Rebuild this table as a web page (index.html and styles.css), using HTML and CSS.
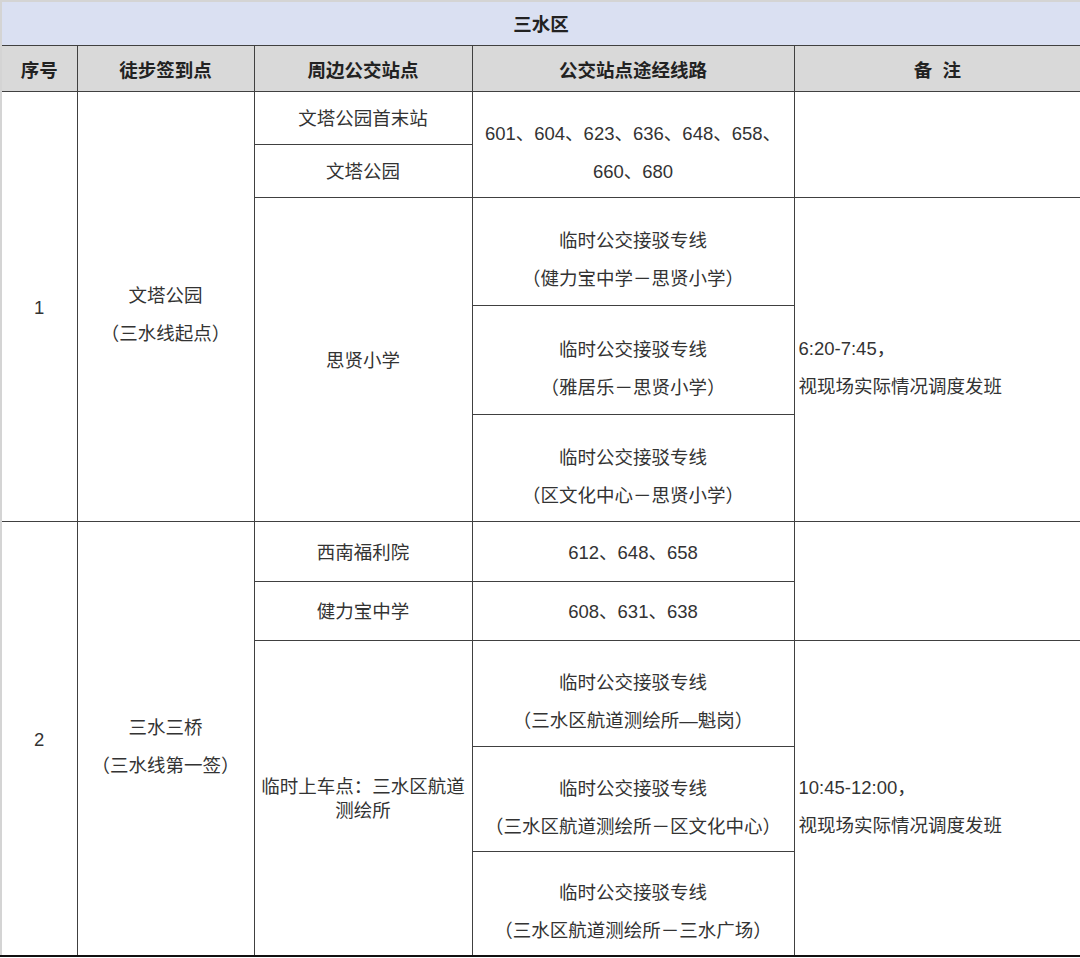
FILE: index.html
```html
<!DOCTYPE html>
<html lang="zh-CN">
<head>
<meta charset="utf-8">
<title>三水区</title>
<link rel="stylesheet" href="styles.css">
</head>
<body>
<table class="grid">
  <colgroup>
    <col class="c1"><col class="c2"><col class="c3"><col class="c4"><col class="c5">
  </colgroup>
  <tr class="h-title"><th colspan="5" class="title">三水区</th></tr>
  <tr class="h-head">
    <th class="head">序号</th>
    <th class="head">徒步签到点</th>
    <th class="head">周边公交站点</th>
    <th class="head">公交站点途经线路</th>
    <th class="head">备&nbsp;&nbsp;注</th>
  </tr>
  <tr class="h53">
    <td rowspan="5">1</td>
    <td rowspan="5" class="multi">文塔公园<br>（三水线起点）</td>
    <td>文塔公园首末站</td>
    <td rowspan="2" class="multi">601、604、623、636、648、658、<br>660、680</td>
    <td rowspan="2"></td>
  </tr>
  <tr class="h53">
    <td>文塔公园</td>
  </tr>
  <tr class="h108">
    <td rowspan="3">思贤小学</td>
    <td class="multi">临时公交接驳专线<br>（健力宝中学－思贤小学）</td>
    <td rowspan="3" class="multi note">6:20-7:45，<br>视现场实际情况调度发班</td>
  </tr>
  <tr class="h109">
    <td class="multi">临时公交接驳专线<br>（雅居乐－思贤小学）</td>
  </tr>
  <tr class="h107">
    <td class="multi">临时公交接驳专线<br>（区文化中心－思贤小学）</td>
  </tr>
  <tr class="h60">
    <td rowspan="5">2</td>
    <td rowspan="5" class="multi">三水三桥<br>（三水线第一签）</td>
    <td>西南福利院</td>
    <td>612、648、658</td>
    <td rowspan="2"></td>
  </tr>
  <tr class="h59">
    <td>健力宝中学</td>
    <td>608、631、638</td>
  </tr>
  <tr class="h106">
    <td rowspan="3" class="tight">临时上车点：三水区航道<br>测绘所</td>
    <td class="multi">临时公交接驳专线<br>（三水区航道测绘所—魁岗）</td>
    <td rowspan="3" class="multi note">10:45-12:00，<br>视现场实际情况调度发班</td>
  </tr>
  <tr class="h105">
    <td class="multi">临时公交接驳专线<br>（三水区航道测绘所－区文化中心）</td>
  </tr>
  <tr class="h105">
    <td class="multi">临时公交接驳专线<br>（三水区航道测绘所－三水广场）</td>
  </tr>
</table>
</body>
</html>
```
FILE: styles.css
```css
html, body {
  margin: 0;
  padding: 0;
  background: #ffffff;
}
body {
  font-family: "Liberation Sans", "Noto Sans CJK SC", sans-serif;
  font-size: 18.5px;
  color: #333333;
}
.grid {
  width: 1080px;
  table-layout: fixed;
  border-collapse: collapse;
  border-left: 2px solid #d4d4d4;
  border-top: 2px solid #d4d4d4;
  border-right: 2px solid #111111;
  border-bottom: 2px solid #111111;
}
.c1 { width: 76px; }
.c2 { width: 177px; }
.c3 { width: 218px; }
.c4 { width: 322px; }
.c5 { width: 287px; }
th, td {
  border: 1px solid #404040;
  padding: 3px 4px 0;
  text-align: center;
  vertical-align: middle;
  line-height: 24px;
  font-weight: normal;
}
.title {
  background: #dae0f2;
  font-weight: bold;
  color: #222222;
  border-top: none;
  border-left: none;
}
.head {
  background: #d9d9d9;
  font-weight: bold;
  color: #222222;
  padding-top: 5px;
}
.h-title { height: 44px; }
.h-head { height: 46px; }
.h53 { height: 53px; }
.h108 { height: 108px; }
.h109 { height: 109px; }
.h107 { height: 107px; }
.h60 { height: 60px; }
.h59 { height: 59px; }
.h106 { height: 106px; }
.h105 { height: 105px; }
.multi {
  line-height: 38px;
  padding-top: 18px;
}
.note {
  text-align: left;
}
.tight {
  line-height: 24px;
}
```
